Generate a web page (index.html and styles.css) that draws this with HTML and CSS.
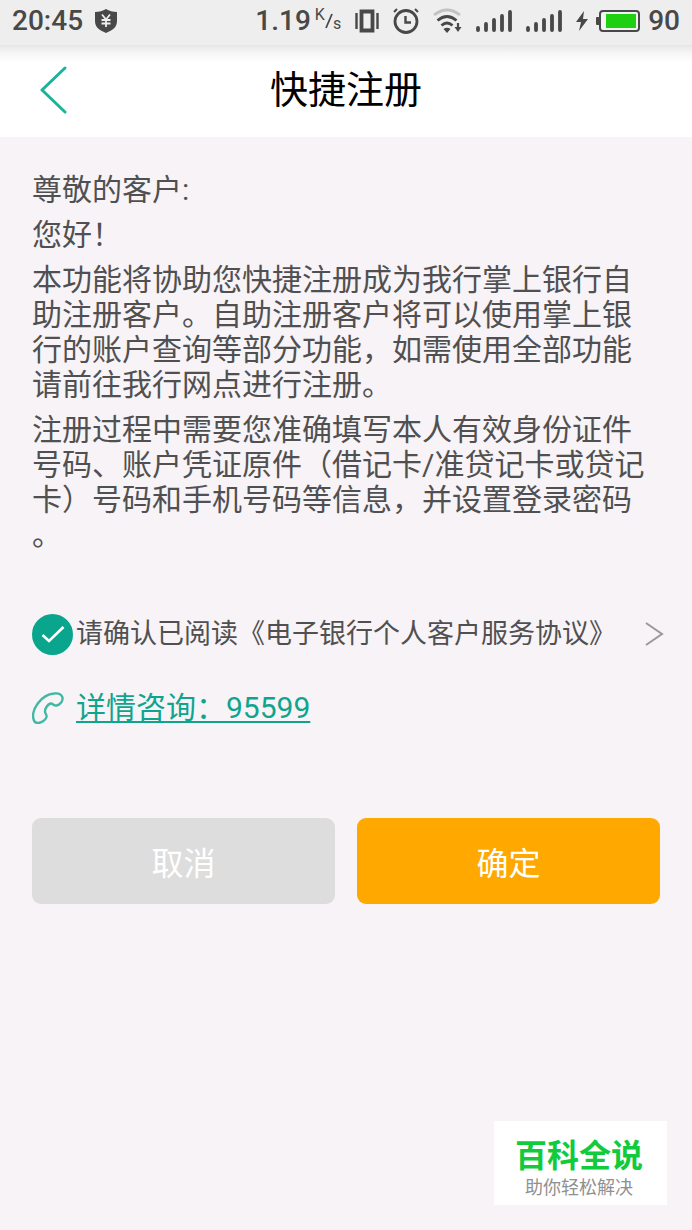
FILE: index.html
```html
<!DOCTYPE html>
<html lang="zh-CN">
<head>
<meta charset="utf-8">
<meta name="viewport" content="width=device-width, initial-scale=1">
<title>快捷注册</title>
<link rel="stylesheet" href="styles.css">
</head>
<body>
<div class="status-bar">
  <div class="status-left">
    <span>20:45</span>
    <svg width="22" height="24" viewBox="0 0 22 24" aria-hidden="true">
      <path d="M11 0C8 2 4 3 0 3v9c0 6 4 9 11 12 7-3 11-6 11-12V3C18 3 14 2 11 0z" fill="#484848"/>
      <path d="M7 5.500l4 5 4-5M11 10.500V18M6.500 11h9M6.500 14.500h9" fill="none" stroke="#eee" stroke-width="1.800"/>
    </svg>
  </div>
  <div class="status-right">
    <span>1.19</span>
    <span class="speed-unit"><span class="unit-top">K</span><svg width="8" height="16" viewBox="0 0 8 16" aria-hidden="true"><path d="M7 1L1 15" stroke="#484848" stroke-width="1.800"/></svg><span class="unit-bottom">s</span></span>
    <svg class="icon-vibrate" width="24" height="24" viewBox="0 0 24 24" aria-hidden="true">
      <path d="M1.500 4v16M22.500 4v16" stroke="#484848" stroke-width="2.400"/>
      <path d="M6.500 2.500h11v19h-11z" fill="none" stroke="#484848" stroke-width="3.800"/>
    </svg>
    <svg class="icon-alarm" width="26" height="26" viewBox="0 0 26 26" fill="none" stroke="#484848" aria-hidden="true">
      <circle cx="13" cy="13.500" r="11" stroke-width="2.800"/>
      <path d="M12.500 8v6.500H18" stroke-width="2.400"/>
      <path d="M1 4l3-3M25 4l-3-3" stroke-width="2"/>
    </svg>
    <svg class="icon-wifi" width="29" height="26" viewBox="0 0 29 26" fill="none" stroke-width="2.800" aria-hidden="true">
      <path d="M1 7Q14 -3 27 7" stroke="#c2c2c2"/>
      <path d="M4.500 12.500Q14 4.500 23.500 12.500M8.500 17.500Q14 12.500 19.500 17.500" stroke="#484848"/>
      <path d="M10.500 21Q14 18.500 17.500 21L14 25z" fill="#484848"/>
      <path d="M25 15v5" stroke="#484848" stroke-width="2.200"/>
      <path d="M21.500 19h7L25 24z" fill="#484848"/>
    </svg>
    <svg class="icon-signal" width="36" height="22" viewBox="0 0 36 22" stroke="#484848" stroke-width="3.800" stroke-linecap="round" aria-hidden="true">
      <path d="M2 18v2M10 14v6M18 10v10M26 6v14M34 2v18"/>
    </svg>
    <svg class="icon-signal" width="36" height="22" viewBox="0 0 36 22" stroke="#484848" stroke-width="3.800" stroke-linecap="round" aria-hidden="true">
      <path d="M2 18v2M10 14v6M18 10v10M26 6v14M34 2v18"/>
    </svg>
    <svg class="icon-bolt" width="12" height="20" viewBox="0 0 12 20" aria-hidden="true">
      <path d="M8 0L0 11h5L3 20l9-12H7z" fill="#484848"/>
    </svg>
    <svg class="icon-battery" width="44" height="22" viewBox="0 0 44 22" aria-hidden="true">
      <rect x="0" y="7" width="4" height="8" rx="1" fill="#484848"/>
      <rect x="4" y="1" width="39" height="20" rx="3" fill="#f4f4f4" stroke="#484848" stroke-width="2"/>
      <rect x="10" y="4" width="30" height="14" fill="#1fd011"/>
    </svg>
    <span>90</span>
  </div>
</div>

<header class="title-bar">
  <button class="back" type="button" aria-label="返回">
    <svg width="28" height="50" viewBox="0 0 28 50" fill="none" stroke="#1bb39b" stroke-width="3" stroke-linecap="round" stroke-linejoin="round" aria-hidden="true"><path d="M25 3L2 25l23 22"/></svg>
  </button>
  <h1>快捷注册</h1>
</header>

<main class="content">
  <section class="notice">
    <p>尊敬的客户:</p>
    <p>您好！</p>
    <p>本功能将协助您快捷注册成为我行掌上银行自助注册客户。自助注册客户将可以使用掌上银行的账户查询等部分功能，如需使用全部功能请前往我行网点进行注册。</p>
    <p>注册过程中需要您准确填写本人有效身份证件号码、账户凭证原件（借记卡/准贷记卡或贷记卡）号码和手机号码等信息，并设置登录密码。</p>
  </section>

  <div class="agreement">
    <span class="check">
      <input id="agree" type="checkbox" checked>
      <svg width="24" height="18" viewBox="0 0 24 18" fill="none" stroke="#fff" stroke-width="2.600" aria-hidden="true"><path d="M1.500 10l6.500 6L22.500 2"/></svg>
    </span>
    <label for="agree">请确认已阅读《电子银行个人客户服务协议》</label>
    <a class="more" href="#agreement" aria-label="查看协议">
      <svg width="20" height="26" viewBox="0 0 20 26" fill="none" stroke="#999" stroke-width="2" aria-hidden="true"><path d="M2 2l16 11L2 24"/></svg>
    </a>
  </div>

  <div class="hotline">
    <svg width="32" height="32" viewBox="0 0 32 32" fill="none" stroke="#3fb9a3" stroke-width="2.400" stroke-linejoin="round" aria-hidden="true">
      <path d="M1.500 27C-1 18 9 2.500 22 1.500c4-.500 7.500 1 8.500 4 .500 4-2.500 7.500-6 8-3 .500-3.500-2.500-6-2-3 1-5.500 5-5.500 8 0 2 2 3 1.500 5.500C13.500 28.500 9 31 6 31c-2.500 0-4-1.500-4.500-4z"/>
    </svg>
    <a href="tel:95599">详情咨询：95599</a>
  </div>

  <div class="actions">
    <button class="btn cancel" type="button">取消</button>
    <button class="btn confirm" type="button">确定</button>
  </div>
</main>

<aside class="badge">
  <strong>百科全说</strong>
  <span>助你轻松解决</span>
</aside>
</body>
</html>
```

FILE: styles.css
```css
* {
  box-sizing: border-box;
}

body {
  margin: 0;
  position: relative;
  min-height: 100vh;
  background: #f7f3f7;
  color: #505050;
  font-family: Roboto, "Noto Sans CJK SC", sans-serif;
  text-spacing-trim: space-all;
}

svg {
  display: block;
  flex: none;
}

.status-bar {
  display: flex;
  justify-content: space-between;
  align-items: flex-start;
  height: 45px;
  padding: 0 12px;
  background: #eee;
  color: #484848;
  font-size: 28px;
  font-weight: 500;
  line-height: 42px;
}

.status-left,
.status-right {
  display: flex;
  align-items: center;
  height: 42px;
}

.status-left {
  gap: 12px;
}

.speed-unit {
  display: flex;
  align-items: center;
  margin: 0 14px 0 4px;
  font-size: 16px;
  font-weight: 400;
  line-height: 16px;
}

.unit-top {
  padding-bottom: 12px;
}

.unit-bottom {
  padding-top: 6px;
}

.icon-vibrate {
  margin-right: 14px;
}

.icon-alarm {
  margin-right: 14px;
}

.icon-wifi {
  margin-right: 14px;
}

.icon-signal {
  margin-right: 14px;
}

.icon-bolt {
  margin-right: 8px;
}

.icon-battery {
  margin-right: 8px;
}

.title-bar {
  display: grid;
  grid-template-columns: 64px 1fr 64px;
  align-items: center;
  height: 92px;
  padding: 0 8px 2px;
  background: linear-gradient(#e6e6e6, #f6f6f6 8px, #fff 18px);
}

.title-bar h1 {
  margin: 0;
  color: #000;
  font-size: 38px;
  font-weight: 400;
  line-height: 56px;
  text-align: center;
}

.back {
  display: flex;
  justify-content: flex-end;
  padding: 0 4px;
  border: 0;
  background: none;
}

.content {
  padding: 35px 32px;
}

.notice {
  display: grid;
  gap: 10px;
  font-size: 30px;
  line-height: 35px;
}

.notice p {
  margin: 0;
  line-break: anywhere;
}

.agreement {
  display: flex;
  align-items: center;
  gap: 3px;
  margin-top: 61px;
  font-size: 27px;
  line-height: 42px;
  white-space: nowrap;
}

.check {
  display: grid;
  place-items: center;
}

.check input,
.check svg {
  grid-area: 1 / 1;
}

.check input {
  appearance: none;
  width: 41px;
  height: 41px;
  margin: 0;
  border: 2px solid #0aa58d;
  border-radius: 50%;
}

.check input:checked {
  background: #0aa58d;
}

.check svg {
  pointer-events: none;
}

.more {
  margin-left: auto;
  margin-right: -4px;
}

.hotline {
  display: flex;
  align-items: center;
  gap: 12px;
  margin-top: 32px;
  font-size: 30px;
  line-height: 42px;
}

.hotline a {
  color: #0fa58d;
  text-decoration-thickness: 2px;
  text-underline-offset: 3px;
  text-decoration-skip-ink: none;
}

.actions {
  display: grid;
  grid-template-columns: 1fr 1fr;
  gap: 22px;
  margin-top: 89px;
}

.btn {
  height: 86px;
  border: 0;
  border-radius: 9px;
  color: #fff;
  font-family: inherit;
  font-size: 32px;
}

.cancel {
  background: #ddd;
}

.confirm {
  background: #ffa800;
}

.badge {
  position: absolute;
  right: 25px;
  bottom: 25px;
  display: grid;
  justify-items: center;
  padding: 16px 24px 6px 21px;
  background: #fff;
  color: #909090;
  font-size: 18px;
  line-height: 23px;
}

.badge strong {
  color: #12cb3c;
  font-size: 32px;
  font-weight: 700;
  line-height: 39px;
}
```
